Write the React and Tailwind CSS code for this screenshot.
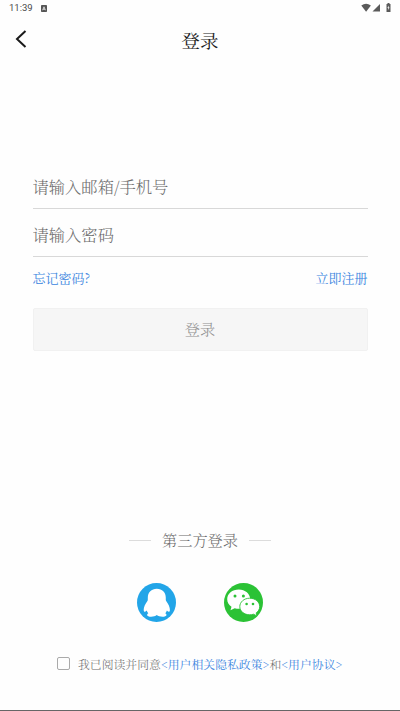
import { useState } from "react";

function StatusBar() {
    return (
        <div className="flex h-4 items-center justify-between pl-[9px] pr-[9px] text-[#4a4a4a]">
            <div className="flex items-center">
                <span className="w-[29px] font-[Roboto,sans-serif] text-[9.5px] font-normal leading-4">11:39</span>
                <svg className="ml-[3px] h-[7px] w-[6px]" viewBox="0 0 6 7">
                    <rect width="6" height="7" rx="0.8" fill="#555" />
                    <path d="M1.6 5.2 3 1.8 4.4 5.2M2 4.2h2" fill="none" stroke="#eee" strokeWidth="0.8" />
                </svg>
            </div>
            <svg className="h-[10px] w-[30px]" viewBox="0 0 30 10" fill="#5a5a5a">
                <path d="M.3 2.6Q5 -1 9.9 2.6L5.1 8.8Z" />
                <path d="M19 1v7.5h-7.5Z" />
                <path d="M25.5 1h1V0h2v1h1v8h-4Z" />
                <path d="M27.8 2.5 26.4 5h.9l-.2 2 1.5-2.6h-.9Z" fill="#fff" />
            </svg>
        </div>
    );
}

function QQIcon() {
    return (
        <svg className="h-[39px] w-[39px]" viewBox="0 0 39 39">
            <circle cx="19.5" cy="19.5" r="19.5" fill="#22a5e8" />
            <path
                d="M19.8 5.8c-5.4 0-9 3.7-9 9 0 1.2.1 1.9-.2 2.9-2.4 3.1-4 6.6-3.9 9.3.1 2.2 1.2 2.4 3 .5.4 1.1.9 2 1.6 2.8-.8.4-1.2 1-1.2 1.6 0 2.3 7.2 2.5 9.7.1 2.5 2.4 9.7 2.2 9.7-.1 0-.6-.4-1.2-1.2-1.6.7-.8 1.2-1.7 1.6-2.8 1.8 1.9 2.9 1.7 3-.5.1-2.7-1.5-6.2-3.9-9.3-.3-1-.2-1.7-.2-2.9 0-5.3-3.6-9-9-9Z"
                fill="#fff"
            />
        </svg>
    );
}

function WechatIcon() {
    return (
        <svg className="h-[39px] w-[39px]" viewBox="0 0 39 39">
            <circle cx="19.5" cy="19.5" r="19.5" fill="#2bc235" />
            <path
                d="M14.8 6.6C8.3 6.6 3.2 10.8 3.2 16.3c0 3 1.6 5.6 4.3 7.4l-1 3.6 4.2-2.1c1.3.4 2.7.6 4.1.6 6.4 0 11.4-4.2 11.4-9.5S21.2 6.6 14.8 6.6Z"
                fill="#fff"
            />
            <path
                d="M25.7 15.2c5.7 0 10 3.8 10 8.4 0 2.6-1.4 4.8-3.5 6.3l.7 3-3.4-1.7c-1.2.4-2.4.6-3.8.6-5.7 0-9.9-3.7-9.9-8.2s4.2-8.4 9.9-8.4Z"
                fill="#fff"
                stroke="#2bc235"
                strokeWidth="0.9"
            />
            <g fill="#2bc235">
                <circle cx="11" cy="13.1" r="1.5" />
                <circle cx="19.4" cy="13.1" r="1.5" />
                <circle cx="22.6" cy="21" r="1.3" />
                <circle cx="29" cy="21" r="1.3" />
            </g>
        </svg>
    );
}

function App() {
    const [account, setAccount] = useState("");
    const [password, setPassword] = useState("");
    const [agreed, setAgreed] = useState(false);

    return (
        <div className="flex h-[711px] w-[400px] flex-col border-b border-[#666] bg-[#fefefe] font-['Noto_Serif_CJK_SC','Noto_Serif_SC','Source_Han_Serif_SC','Noto_Sans_CJK_SC',serif] font-light">
            <StatusBar />

            {/* Title bar */}
            <header className="grid h-12 grid-cols-[40px_1fr_40px] items-center">
                <button type="button" className="-mt-0.5 pl-[15px]" aria-label="返回">
                    <svg className="h-[18px] w-3" viewBox="0 0 12 18" fill="none" stroke="#1a1a1a" strokeWidth="2">
                        <path d="M10.5 1 2 9l8.5 8" />
                    </svg>
                </button>
                <h1 className="text-center text-[18.5px] font-normal leading-6 text-[#1a1a1a]">登录</h1>
            </header>

            <form className="mt-[102px] flex flex-col pl-[32.5px] pr-[32.5px]" onSubmit={(e) => e.preventDefault()}>
                <input
                    type="text"
                    value={account}
                    onChange={(e) => setAccount(e.target.value)}
                    placeholder="请输入邮箱/手机号"
                    className="h-[43px] border-b border-[#d8d8d8] pb-[3px] text-[16.3px] text-[#333] placeholder:text-[#6c6c6c] focus:outline-none"
                />
                <input
                    type="password"
                    value={password}
                    onChange={(e) => setPassword(e.target.value)}
                    placeholder="请输入密码"
                    className="mt-[5px] h-[43px] border-b border-[#d8d8d8] pb-[3px] text-[16.3px] text-[#333] placeholder:text-[#6c6c6c] focus:outline-none"
                />
                <div className="mt-[11px] flex justify-between text-[13px] font-normal leading-5 text-[#3a85de]">
                    <button type="button">忘记密码?</button>
                    <button type="button">立即注册</button>
                </div>
                <button
                    type="submit"
                    className="mt-5 h-[43px] rounded-[2px] border border-[#f1f1f1] bg-[#f6f6f6] text-[15.2px] text-[#909090]"
                >
                    登录
                </button>
            </form>

            {/* Third-party login */}
            <div className="mt-[178px] flex items-center justify-center gap-[11px]">
                <span className="h-px w-[22px] bg-[#dcdcdc]" />
                <span className="text-[15.2px] leading-[22px] text-[#6c6c6c]">第三方登录</span>
                <span className="h-px w-[22px] bg-[#dcdcdc]" />
            </div>
            <div className="mt-[32px] flex justify-center gap-[48px]">
                <button type="button" aria-label="QQ"><QQIcon /></button>
                <button type="button" aria-label="微信"><WechatIcon /></button>
            </div>

            <label className="mt-[32px] flex items-center pl-[57px] text-[11.85px] leading-5 text-[#6c6c6c]">
                <input
                    type="checkbox"
                    checked={agreed}
                    onChange={(e) => setAgreed(e.target.checked)}
                    className="-mt-px mr-[8px] h-[13px] w-[13px] appearance-none rounded-[2px] border border-[#aaa] checked:bg-[#3a85de]"
                />
                <span className="whitespace-nowrap">
                    我已阅读并同意
                    <span className="font-normal text-[#3a85de]">&lt;用户相关隐私政策&gt;</span>
                    和
                    <span className="font-normal text-[#3a85de]">&lt;用户协议&gt;</span>
                </span>
            </label>
        </div>
    );
}

export default App;
